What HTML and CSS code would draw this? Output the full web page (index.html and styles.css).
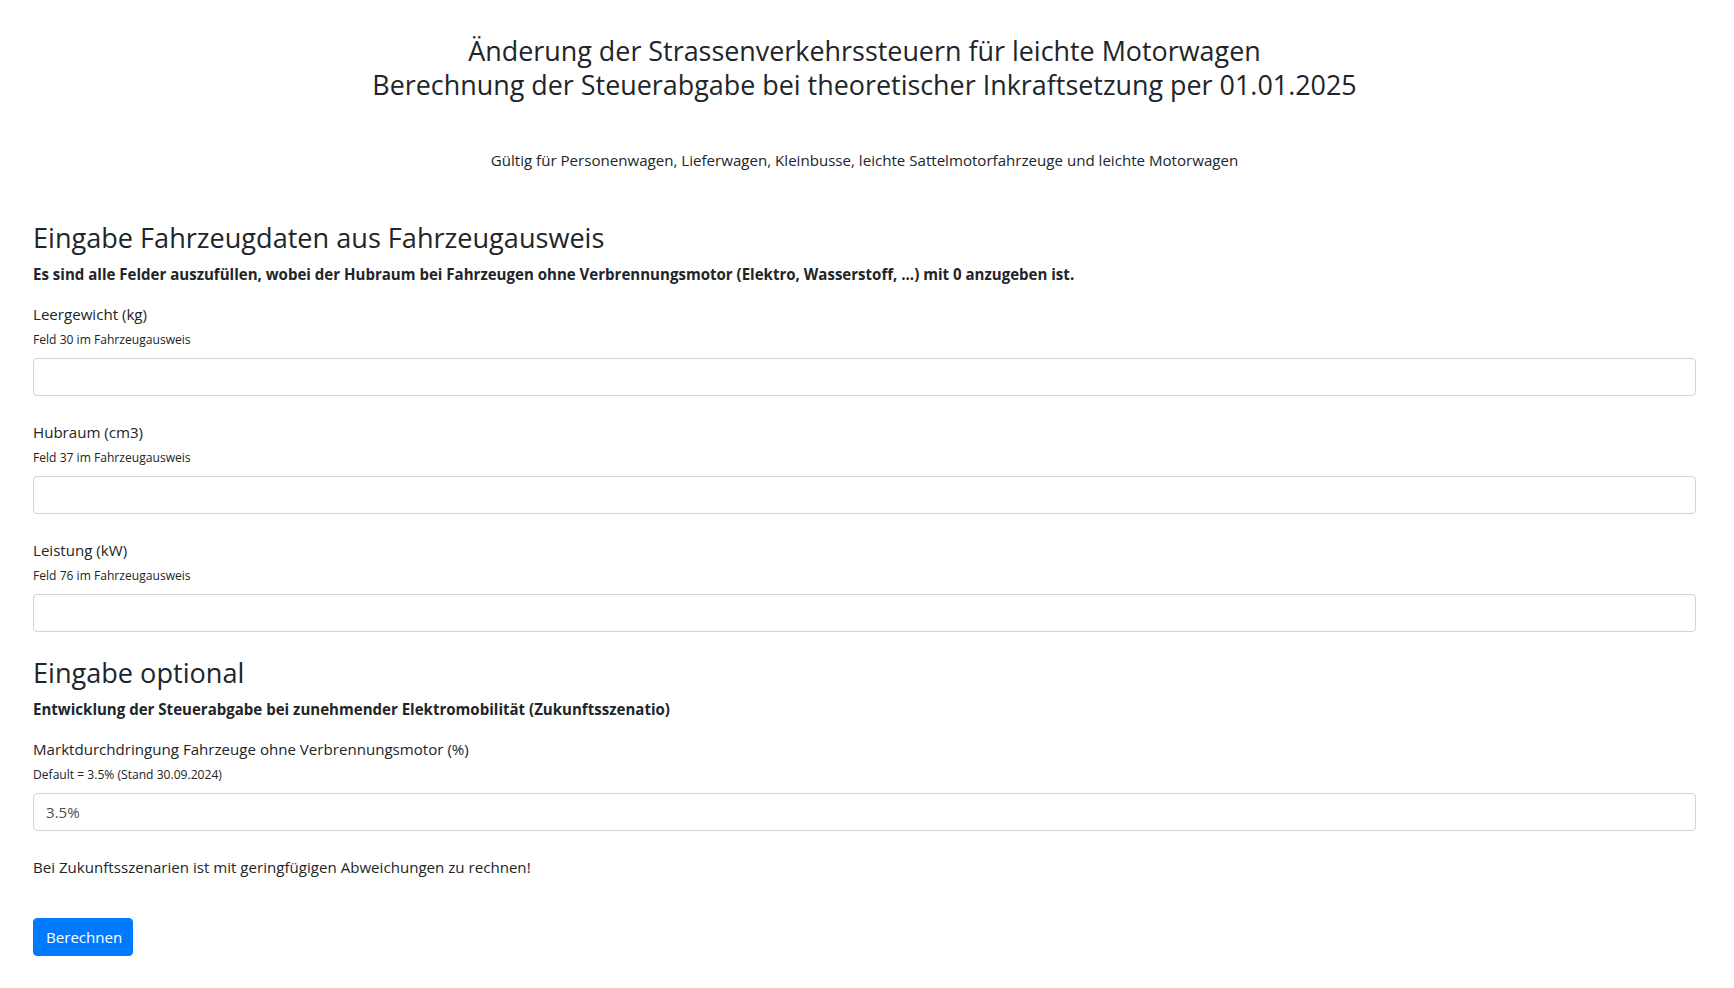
FILE: index.html
```html
<!DOCTYPE html>
<html lang="de">
<head>
<meta charset="utf-8">
<title>Strassenverkehrssteuern</title>
<link rel="stylesheet" href="styles.css">
</head>
<body>
<main class="page">
  <header class="intro">
    <h1 class="title">
      <span class="title-line">Änderung der Strassenverkehrssteuern für leichte Motorwagen</span>
      <span class="title-line">Berechnung der Steuerabgabe bei theoretischer Inkraftsetzung per 01.01.2025</span>
    </h1>
    <p class="subtitle">Gültig für Personenwagen, Lieferwagen, Kleinbusse, leichte Sattelmotorfahrzeuge und leichte Motorwagen</p>
  </header>

  <section class="section">
    <h2 class="section-title">Eingabe Fahrzeugdaten aus Fahrzeugausweis</h2>
    <p class="section-lead">Es sind alle Felder auszufüllen, wobei der Hubraum bei Fahrzeugen ohne Verbrennungsmotor (Elektro, Wasserstoff, ...) mit 0 anzugeben ist.</p>

    <div class="field">
      <label class="field-label" for="gewicht">Leergewicht (kg)</label>
      <small class="field-hint">Feld 30 im Fahrzeugausweis</small>
      <input class="field-input" id="gewicht" type="text">
    </div>
    <div class="field">
      <label class="field-label" for="hubraum">Hubraum (cm3)</label>
      <small class="field-hint">Feld 37 im Fahrzeugausweis</small>
      <input class="field-input" id="hubraum" type="text">
    </div>
    <div class="field">
      <label class="field-label" for="leistung">Leistung (kW)</label>
      <small class="field-hint">Feld 76 im Fahrzeugausweis</small>
      <input class="field-input" id="leistung" type="text">
    </div>
  </section>

  <section class="section section-optional">
    <h2 class="section-title">Eingabe optional</h2>
    <p class="section-lead">Entwicklung der Steuerabgabe bei zunehmender Elektromobilität (Zukunftsszenatio)</p>
    <div class="field">
      <label class="field-label" for="markt">Marktdurchdringung Fahrzeuge ohne Verbrennungsmotor (%)</label>
      <small class="field-hint">Default = 3.5% (Stand 30.09.2024)</small>
      <input class="field-input" id="markt" type="text" value="3.5%">
    </div>
    <p class="note">Bei Zukunftsszenarien ist mit geringfügigen Abweichungen zu rechnen!</p>
    <button class="btn-primary" type="button">Berechnen</button>
  </section>
</main>
</body>
</html>
```
FILE: styles.css
```css
* { box-sizing: border-box; }

html, body {
  margin: 0;
  background: #fff;
}

body {
  font-family: "Open Sans", "Liberation Sans", sans-serif;
  font-size: 15.1px;
  color: #212529;
}

.page {
  padding: 34px 38px 30px 33px;
}

.intro {
  text-align: center;
}

.title {
  margin: 0;
  font-size: 26.9px;
  font-weight: 400;
  line-height: 34px;
}

.title-line {
  display: block;
}

.subtitle {
  margin: 47px 0 0;
  font-size: 15.1px;
  line-height: 22px;
}

.section {
  margin-top: 48px;
}

.section-optional {
  margin-top: 22px;
}

.section-title {
  margin: 0;
  font-size: 27.1px;
  font-weight: 400;
  line-height: 38px;
}

.section-lead {
  margin: 5px 0 0;
  font-weight: 700;
  font-size: 15.05px;
  line-height: 24px;
}

.field {
  display: flex;
  flex-direction: column;
  margin-top: 16px;
}

.field + .field {
  margin-top: 24px;
}

.field-label {
  font-size: 15.1px;
  line-height: 24px;
}

.field-hint {
  margin-top: 4px;
  font-size: 12.1px;
  line-height: 19px;
}

.field-input {
  margin-top: 9px;
  height: 38px;
  width: 100%;
  padding: 6px 12px;
  border: 1px solid #ced4da;
  border-radius: 4px;
  font-family: inherit;
  font-size: 15.1px;
  color: #495057;
  background: #fff;
}

.note {
  margin: 24px 0 0;
  font-size: 15.1px;
  line-height: 24px;
}

.btn-primary {
  display: block;
  margin-top: 39px;
  height: 38px;
  width: 100px;
  padding: 0 12px;
  border: 1px solid #007bff;
  border-radius: 4px;
  background: #007bff;
  color: #fff;
  font-family: inherit;
  font-size: 15.1px;
  line-height: 36px;
}
```
